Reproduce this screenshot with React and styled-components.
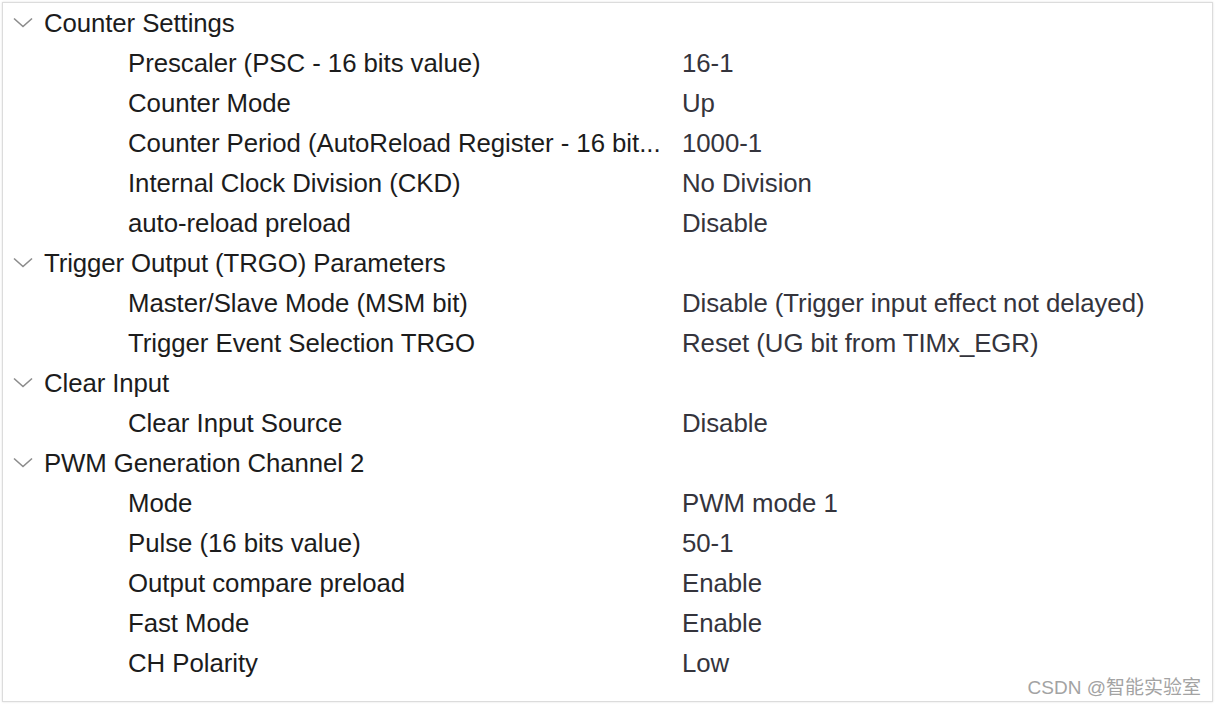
import React from "react";
import styled, { createGlobalStyle } from "styled-components";

const GlobalStyle = createGlobalStyle`
  html, body {
    margin: 0;
    padding: 0;
    background: #ffffff;
  }
  body {
    font-family: "Liberation Sans", Arial, sans-serif;
  }
`;

const sections = [
  {
    title: "Counter Settings",
    items: [
      ["Prescaler (PSC - 16 bits value)", "16-1"],
      ["Counter Mode", "Up"],
      ["Counter Period (AutoReload Register - 16 bit...", "1000-1"],
      ["Internal Clock Division (CKD)", "No Division"],
      ["auto-reload preload", "Disable"],
    ],
  },
  {
    title: "Trigger Output (TRGO) Parameters",
    items: [
      ["Master/Slave Mode (MSM bit)", "Disable (Trigger input effect not delayed)"],
      ["Trigger Event Selection TRGO", "Reset (UG bit from TIMx_EGR)"],
    ],
  },
  {
    title: "Clear Input",
    items: [["Clear Input Source", "Disable"]],
  },
  {
    title: "PWM Generation Channel 2",
    items: [
      ["Mode", "PWM mode 1"],
      ["Pulse (16 bits value)", "50-1"],
      ["Output compare preload", "Enable"],
      ["Fast Mode", "Enable"],
      ["CH Polarity", "Low"],
    ],
  },
];

const Page = styled.div`
  position: relative;
  width: 1216px;
  height: 706px;
  padding: 2px 0 0 2px;
  box-sizing: border-box;
`;

const Panel = styled.div`
  width: 1211px;
  height: 700px;
  box-sizing: border-box;
  border: 1px solid #dcdcdc;
  box-shadow: 0 0 2px rgba(0, 0, 0, 0.12);
  background: #ffffff;
  overflow: hidden;
`;

const Tree = styled.div`
  display: flex;
  flex-direction: column;
`;

const HeaderRow = styled.div`
  display: flex;
  align-items: center;
  height: 40px;
  font-size: 25.8px;
  letter-spacing: -0.1px;
  color: #1c1c1c;
`;

const Chevron = styled.span`
  display: flex;
  align-items: center;
  justify-content: center;
  width: 36px;
  margin-right: 5px;
  padding-left: 3px;
  box-sizing: border-box;
`;

const ItemRow = styled.div`
  display: grid;
  grid-template-columns: 554px 1fr;
  align-items: center;
  height: 40px;
  padding-left: 125px;
  font-size: 25.8px;
  letter-spacing: -0.05px;
  line-height: 40px;
`;

const Label = styled.span`
  color: #1c1c1c;
  white-space: nowrap;
  overflow: hidden;
`;

const Value = styled.span`
  color: #34343c;
  white-space: nowrap;
`;

const Watermark = styled.div`
  position: absolute;
  right: 15px;
  bottom: 7px;
  font-family: "Liberation Sans", "Noto Sans CJK SC", sans-serif;
  font-size: 19px;
  color: #a3a3a3;
  text-shadow: 0 0 2px #ffffff;
`;

const ChevronIcon = () => (
  <svg width="22" height="12" viewBox="0 0 22 12">
    <path d="M2 1.5 L11 9.5 L20 1.5" fill="none" stroke="#8c8c8c" strokeWidth="1.6" />
  </svg>
);

export default function App() {
  return (
    <Page>
      <GlobalStyle />
      <Panel>
        <Tree>
          {sections.map((s) => (
            <React.Fragment key={s.title}>
              <HeaderRow>
                <Chevron>
                  <ChevronIcon />
                </Chevron>
                {s.title}
              </HeaderRow>
              {s.items.map(([label, value]) => (
                <ItemRow key={label}>
                  <Label>{label}</Label>
                  <Value>{value}</Value>
                </ItemRow>
              ))}
            </React.Fragment>
          ))}
        </Tree>
      </Panel>
      <Watermark>CSDN @智能实验室</Watermark>
    </Page>
  );
}
